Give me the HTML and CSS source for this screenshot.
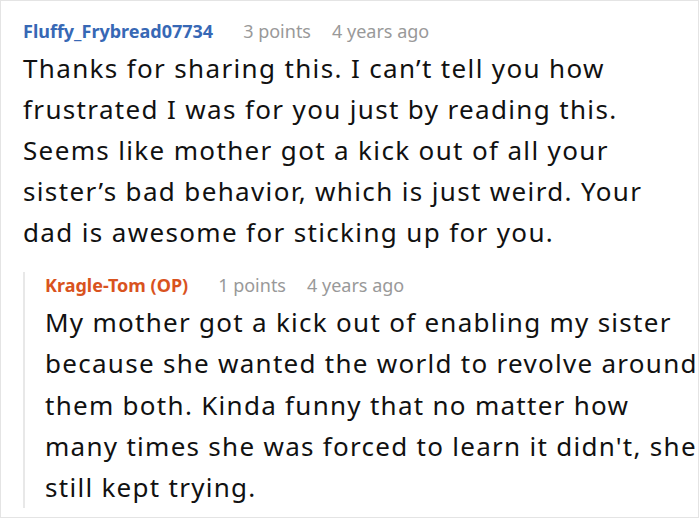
FILE: index.html
```html
<!DOCTYPE html>
<html>
<head>
<meta charset="utf-8">
<link rel="stylesheet" href="styles.css">
</head>
<body>
<div class="box">
  <div class="comment">
    <div class="meta">
      <span class="user user-blue">Fluffy_Frybread07734</span>
      <span class="info">3 points</span>
      <span class="info">4 years ago</span>
    </div>
    <p class="text">Thanks for sharing this. I can’t tell you how frustrated I was for you just by reading this. Seems like mother got a kick out of all your sister’s bad behavior, which is just weird. Your dad is awesome for sticking up for you.</p>
    <div class="reply">
      <div class="meta">
        <span class="user user-orange">Kragle-Tom (OP)</span>
        <span class="info">1 points</span>
        <span class="info">4 years ago</span>
      </div>
      <p class="text">My mother got a kick out of enabling my sister because she wanted the world to revolve around them both. Kinda funny that no matter how many times she was forced to learn it didn't, she still kept trying.</p>
    </div>
  </div>
</div>
</body>
</html>
```
FILE: styles.css
```css
html, body {
  margin: 0;
  padding: 0;
  background: #fff;
}
.box {
  width: 697px;
  height: 516px;
  border: 1px solid #e4e4e4;
  font-family: "Noto Sans", "Open Sans", sans-serif;
  color: #111;
  overflow: hidden;
}
.comment {
  padding: 17px 0 0 22px;
}
.meta {
  display: flex;
  align-items: baseline;
  gap: 21px;
  line-height: 26px;
}
.user {
  font-weight: 700;
  font-size: 18px;
  margin-right: 9px;
}
.user-blue { color: #3768b5; }
.user-orange { color: #d9531e; }
.info {
  font-size: 18px;
  color: #999;
}
.text {
  margin: 4px 0 0 0;
  font-size: 26px;
  letter-spacing: 1.35px;
  line-height: 41px;
}
.reply .text {
  line-height: 41.3px;
  letter-spacing: 1.28px;
}
.reply {
  margin-top: 19px;
  border-left: 2px solid #e8e8e8;
  padding-left: 20px;
}
```
